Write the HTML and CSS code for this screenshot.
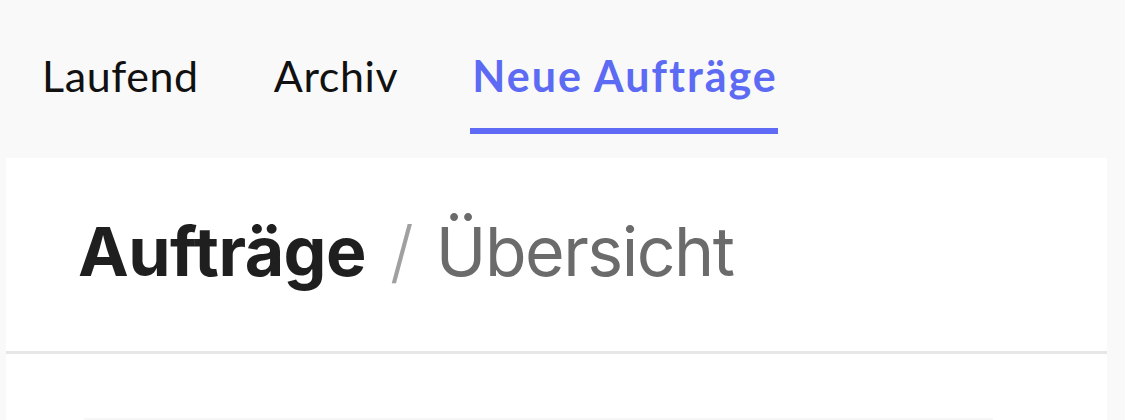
FILE: index.html
```html
<!DOCTYPE html>
<html lang="de">
<head>
<meta charset="utf-8">
<title>Aufträge</title>
<link rel="stylesheet" href="styles.css">
</head>
<body>
<div class="page">
  <nav class="tabs">
    <a class="tab">Laufend</a>
    <a class="tab">Archiv</a>
    <a class="tab active">Neue Aufträge</a>
  </nav>
  <main class="card">
    <header class="card-header">
      <h1 class="title"><span class="title-main">Aufträge</span><span class="title-sep">/</span><span class="title-sub">Übersicht</span></h1>
    </header>
    <section class="card-body">
      <div class="list-top"></div>
    </section>
  </main>
</div>
</body>
</html>
```

FILE: styles.css
```css
html, body {
  margin: 0;
  padding: 0;
  background: #f9f9f9;
}

.page {
  width: 1125px;
  height: 420px;
  overflow: hidden;
}

.tabs {
  display: flex;
  gap: 75px;
  padding: 0 0 0 42px;
  height: 158px;
  box-sizing: border-box;
  font-family: "Lato", "Noto Sans", sans-serif;
}

.tab {
  display: flex;
  align-items: flex-start;
  padding-top: 52px;
  height: 134px;
  box-sizing: border-box;
  font-size: 43px;
  line-height: 48px;
  color: #111111;
  letter-spacing: 0.6px;
  border-bottom: 6px solid transparent;
}

.tab.active {
  color: #5d6af3;
  font-weight: 700;
  letter-spacing: 2px;
  margin-left: -3px;
  padding: 52px 0 0 2px;
  border-bottom-color: #5f6af5;
}

.card {
  margin: 0 18px 0 6px;
  background: #ffffff;
  height: 262px;
}

.card-header {
  height: 196px;
  border-bottom: 3px solid #e7e7e7;
  box-sizing: border-box;
  display: flex;
  align-items: center;
  padding: 0 0 0 72px;
}

.title {
  margin: 0;
  font-family: "Inter", "Liberation Sans", sans-serif;
  font-size: 68px;
  line-height: 80px;
  font-weight: 400;
  display: flex;
  align-items: baseline;
  gap: 24px;
  padding-bottom: 8px;
}

.title-main {
  font-weight: 700;
  color: #1f1f1f;
  letter-spacing: -0.5px;
}

.title-sep {
  color: #a0a0a0;
  font-weight: 300;
}

.title-sub {
  color: #6b6b6b;
  font-weight: 400;
  letter-spacing: -1.5px;
  margin-left: -2px;
}

.card-body {
  height: 66px;
  display: flex;
  align-items: flex-end;
  padding: 0 114px 0 78px;
}

.list-top {
  flex: 1;
  height: 2px;
  background: #f7f7f7;
}
```
